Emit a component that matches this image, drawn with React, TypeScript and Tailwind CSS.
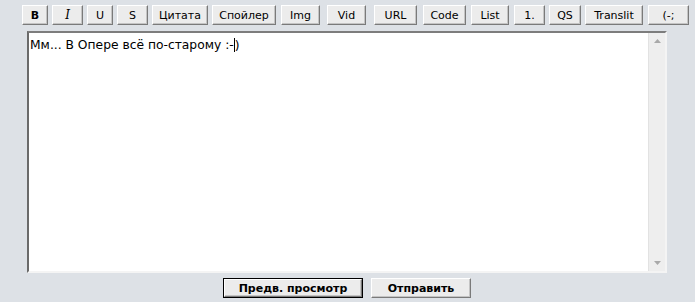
import React from 'react';

const tools = [
  { label: 'B', w: 'w-[26px]', ml: 'ml-0', extra: 'font-bold' },
  { label: 'I', w: 'w-[31px]', ml: 'ml-[4px]', extra: "italic font-['DejaVu_Serif',serif] text-[12px]" },
  { label: 'U', w: 'w-[26px]', ml: 'ml-[4px]', extra: '' },
  { label: 'S', w: 'w-[31px]', ml: 'ml-[4px]', extra: '' },
  { label: 'Цитата', w: 'w-[56px]', ml: 'ml-[4px]', extra: '' },
  { label: 'Спойлер', w: 'w-[64px]', ml: 'ml-[4px]', extra: '' },
  { label: 'Img', w: 'w-[39px]', ml: 'ml-[5px]', extra: '' },
  { label: 'Vid', w: 'w-[39px]', ml: 'ml-[7px]', extra: '' },
  { label: 'URL', w: 'w-[43px]', ml: 'ml-[8px]', extra: '' },
  { label: 'Code', w: 'w-[43px]', ml: 'ml-[6px]', extra: '' },
  { label: 'List', w: 'w-[38px]', ml: 'ml-[5px]', extra: '' },
  { label: '1.', w: 'w-[31px]', ml: 'ml-[5px]', extra: '' },
  { label: 'QS', w: 'w-[32px]', ml: 'ml-[4px]', extra: '' },
  { label: 'Translit', w: 'w-[58px]', ml: 'ml-[4px]', extra: '' },
  { label: '(-;', w: 'w-[41px]', ml: 'ml-[5px]', extra: '' },
];

const bevel =
  'border border-t-white border-l-white border-r-[#7a7a7a] border-b-[#7a7a7a] bg-[#ececec] shadow-[inset_-1px_-1px_0_#c4c4c4]';

const App: React.FC = () => {
  return (
    <div className="w-[695px] h-[302px] bg-[#dde1e6] font-['DejaVu_Sans',Verdana,sans-serif] text-black overflow-hidden">
      <div className="flex pl-[22px] pt-[5px] h-[26px]">
        {tools.map((t) => (
          <div
            key={t.label}
            className={`${t.w} ${t.ml} h-[20px] ${bevel} flex items-center justify-center text-[11px] leading-none`}
          >
            <span className={t.extra}>{t.label}</span>
          </div>
        ))}
      </div>

      <div className="ml-[27px] mt-[5px] w-[640px] h-[242px] border-2 border-t-[#7d7d7d] border-l-[#6a6a6a] border-r-[#f4f4f4] border-b-[#f4f4f4] bg-white flex">
        <div className="flex-1 pl-[1px] pt-[5px] text-[12.3px] leading-[14px]">
          Мм... В Опере всё по-старому :-<span className="border-l border-black">)</span>
        </div>
        <div className="w-[17px] h-full bg-[#eeeeee] border-l border-[#e2e2e2] flex flex-col justify-between items-center py-[5px]">
          <svg width="9" height="6" viewBox="0 0 9 6">
            <path d="M4.5 1 L8 5 L1 5 Z" fill="#a9a9a9" />
          </svg>
          <svg width="9" height="6" viewBox="0 0 9 6">
            <path d="M1 1 L8 1 L4.5 5 Z" fill="#a9a9a9" />
          </svg>
        </div>
      </div>

      <div className="flex pl-[223px] pt-[5px]">
        <div className="w-[140px] h-[20px] border border-black">
          <div className={`w-full h-full ${bevel} flex items-center justify-center text-[11px] font-bold leading-none`}>
            Предв. просмотр
          </div>
        </div>
        <div className={`ml-[8px] w-[100px] h-[20px] ${bevel} flex items-center justify-center text-[11px] font-bold leading-none`}>
          Отправить
        </div>
      </div>
    </div>
  );
};

export default App;
